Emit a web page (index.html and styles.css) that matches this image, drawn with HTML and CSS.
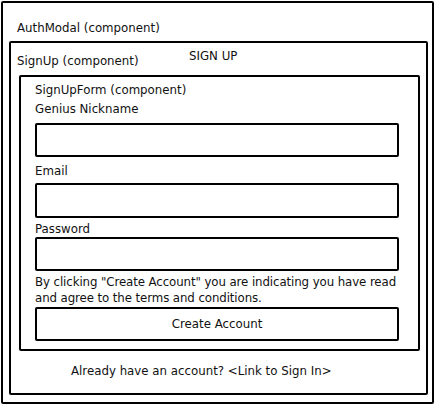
FILE: index.html
```html
<!DOCTYPE html>
<html lang="en">
<head>
  <meta charset="UTF-8">
  <title>AuthModal</title>
  <link rel="stylesheet" href="styles.css">
</head>
<body>
  <div class="modal">
    <div class="modal-title">AuthModal (component)</div>

    <div class="signup">
      <div class="signup-head">
        <span>SignUp (component)</span>
        <span class="signup-title">SIGN UP</span>
      </div>

      <div class="form">
        <div class="form-title">SignUpForm (component)</div>
        <label class="label label-nick">Genius Nickname</label>
        <div class="field"></div>
        <label class="label label-email">Email</label>
        <div class="field field-email"></div>
        <label class="label label-pass">Password</label>
        <div class="field field-pass"></div>
        <p class="terms">By clicking "Create Account" you are indicating you have read and agree to the terms and conditions.</p>
        <div class="button">Create Account</div>
      </div>

      <div class="signin">Already have an account? &lt;Link to Sign In&gt;</div>
    </div>
  </div>
</body>
</html>
```

FILE: styles.css
```css
body {
  margin: 0;
  background: #fff;
  font-family: "DejaVu Sans", Arial, sans-serif;
  font-size: 11.8px;
  color: #111;
}
.modal {
  margin: 1px;
  height: 399px;
  border: 2px solid #000;
  border-radius: 2px;
  padding: 0 4px 0 6px;
  box-sizing: content-box;
  width: 419px;
}
.modal-title {
  height: 38px;
  line-height: 16px;
  padding: 17px 0 0 8px;
  box-sizing: border-box;
}
.signup {
  border: 2px solid #000;
  border-radius: 2px;
  height: 354px;
  box-sizing: border-box;
  padding: 0 6px 0 8px;
}
.signup-head {
  position: relative;
  height: 32px;
  line-height: 16px;
  padding: 10px 0 0 0;
  box-sizing: border-box;
  margin-left: -2px;
}
.signup-title {
  position: absolute;
  left: 172px;
  top: 5px;
}
.form {
  border: 2px solid #000;
  border-radius: 2px;
  height: 276px;
  box-sizing: border-box;
  padding: 5px 19px 0 14px;
}
.form-title, .label, .terms {
  display: block;
  line-height: 16px;
}
.label-nick { margin-top: 3px; }
.label-email { margin-top: 6px; }
.label-pass { margin-top: 3px; }
.field {
  height: 34px;
  border: 2px solid #000;
  border-radius: 2px;
  box-sizing: border-box;
  margin-top: 6px;
}
.field-email { margin-top: 4px; height: 35px; }
.field-pass { margin-top: 0; }
.terms {
  margin: 3px 0 0 0;
  width: 368px;
  letter-spacing: -0.1px;
}
.button {
  margin-top: 1px;
  height: 34px;
  border: 2px solid #000;
  border-radius: 2px;
  box-sizing: border-box;
  text-align: center;
  line-height: 30px;
}
.signin {
  padding: 12px 0 0 52px;
  line-height: 16px;
}
```
